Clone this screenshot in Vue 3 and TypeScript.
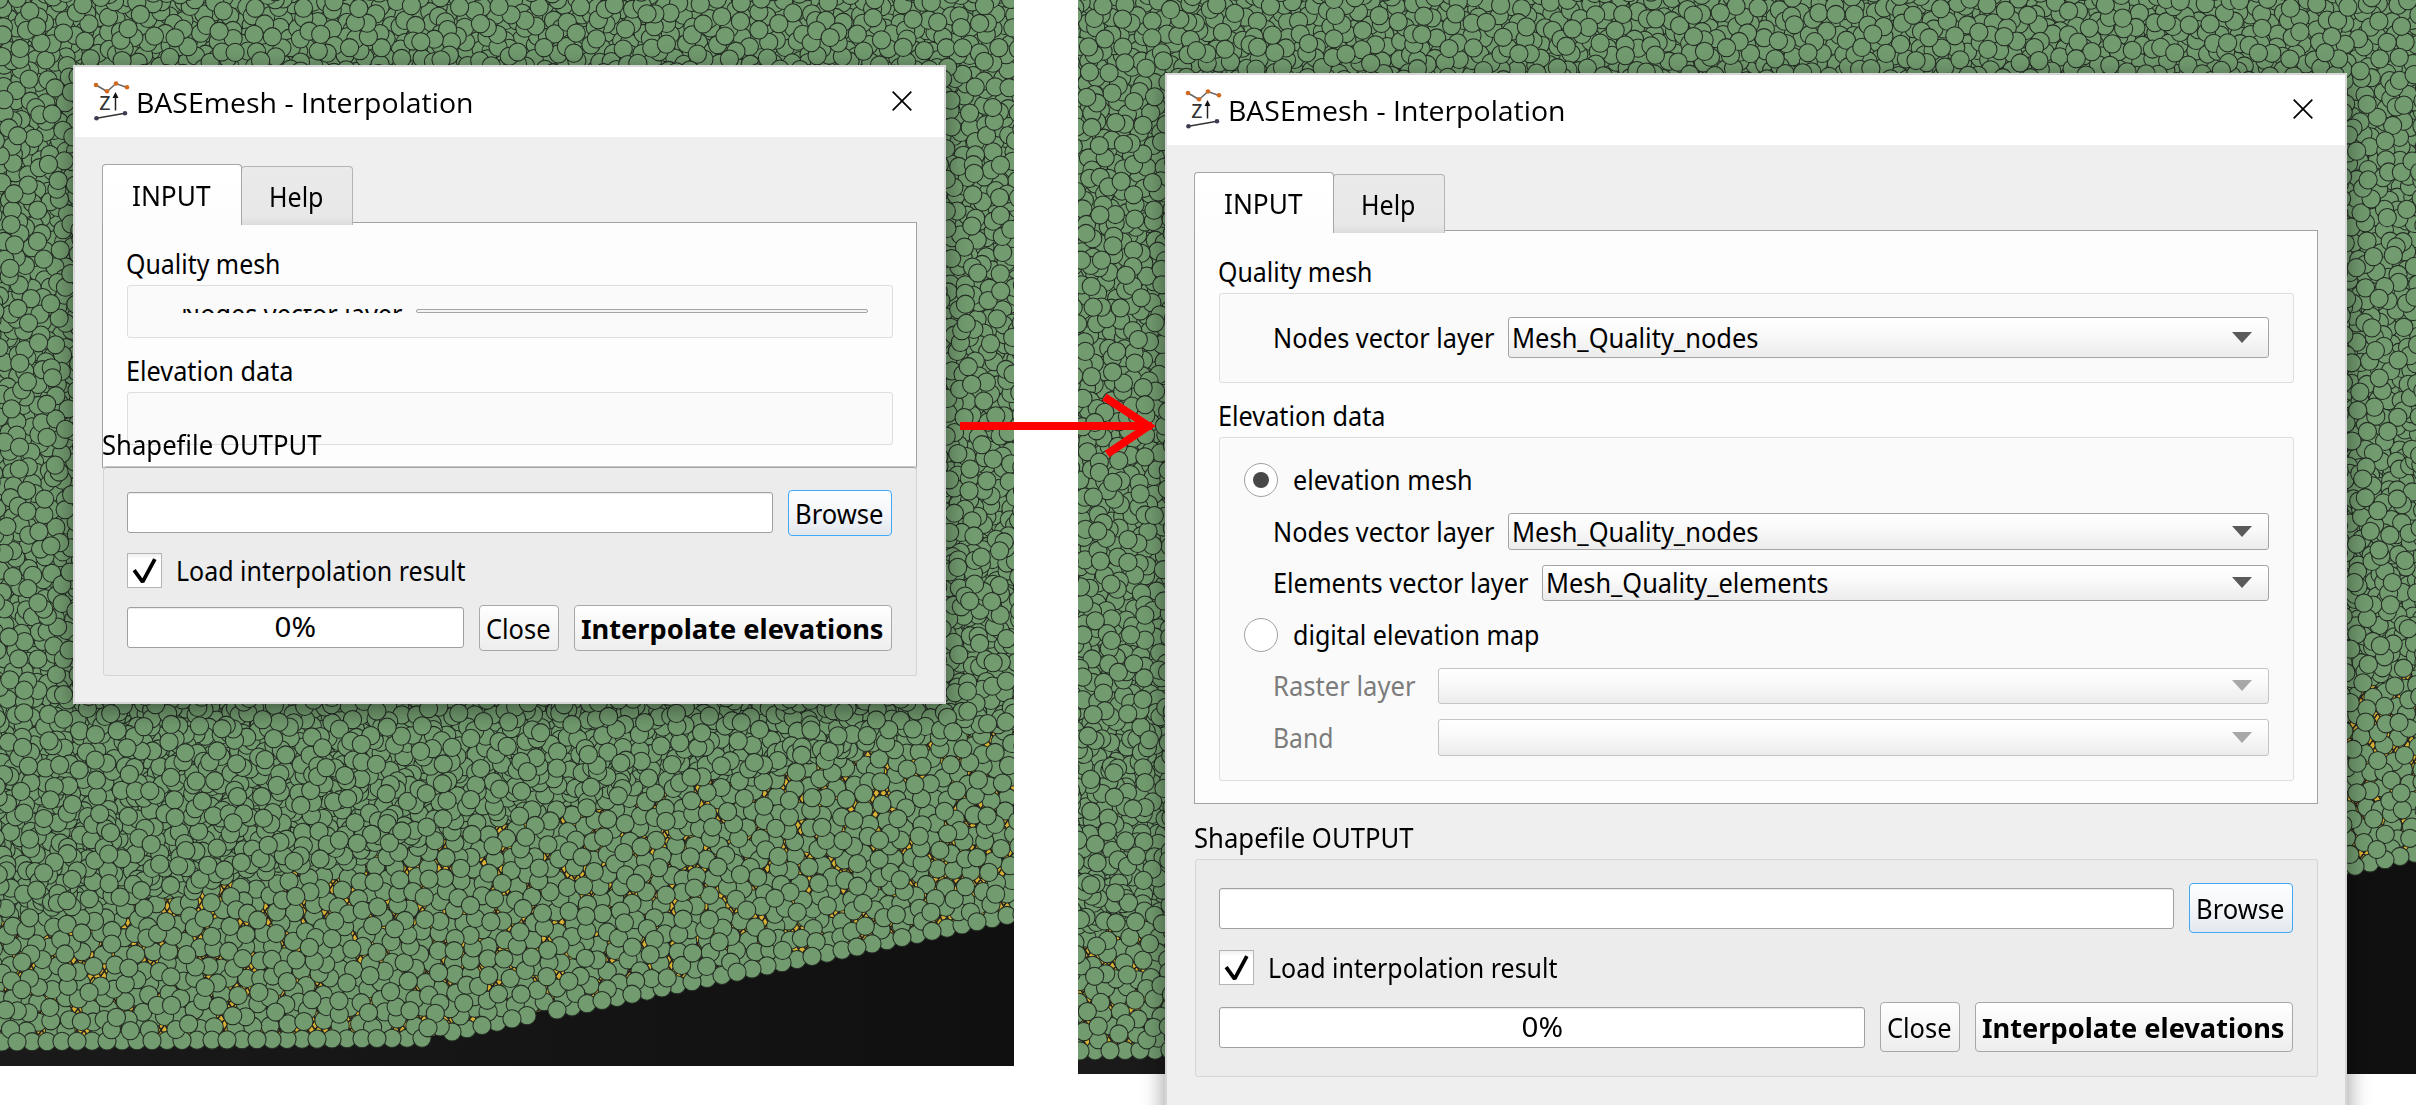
<script setup lang="ts">
import { onMounted, ref } from 'vue'

interface DialogSpec {
  id: string
  collapsed: boolean
}

interface Point {
  x: number
  y: number
}

interface MapSpec {
  width: number
  height: number
  seed: number
  edge: Point[]
  sparse: Point[]
}

const dialogs: DialogSpec[] = [
  { id: 'before', collapsed: true },
  { id: 'after', collapsed: false },
]

const maps: MapSpec[] = [
  {
    width: 1014,
    height: 1066,
    seed: 7,
    edge: [
      { x: 0, y: 1042 },
      { x: 432, y: 1038 },
      { x: 452, y: 1032 },
      { x: 530, y: 1015 },
      { x: 552, y: 1011 },
      { x: 1014, y: 914 },
    ],
    sparse: [
      { x: 0, y: 915 },
      { x: 170, y: 890 },
      { x: 330, y: 860 },
      { x: 480, y: 825 },
      { x: 640, y: 792 },
      { x: 820, y: 755 },
      { x: 1014, y: 722 },
    ],
  },
  {
    width: 1338,
    height: 1074,
    seed: 23,
    edge: [
      { x: 0, y: 1051 },
      { x: 430, y: 1046 },
      { x: 1269, y: 868 },
      { x: 1338, y: 853 },
    ],
    sparse: [
      { x: 0, y: 930 },
      { x: 430, y: 850 },
      { x: 1269, y: 685 },
      { x: 1338, y: 665 },
    ],
  },
]

const canvases = ref<HTMLCanvasElement[]>([])

// Horizontally scales a label to its nominal ink width.
const vFit = {
  mounted(el: HTMLElement, binding: { value: number }) {
    const natural = el.getBoundingClientRect().width
    const target = binding.value + 2.5
    el.style.width = `${target}px`
    el.style.transform = `scaleX(${target / natural})`
  },
}

function random(seed: number) {
  let s = seed
  return () => {
    s = (s + 0x6d2b79f5) | 0
    let t = Math.imul(s ^ (s >>> 15), 1 | s)
    t = (t + Math.imul(t ^ (t >>> 7), 61 | t)) ^ t
    return ((t ^ (t >>> 14)) >>> 0) / 4294967296
  }
}

function heightAt(line: Point[], x: number): number {
  for (let i = 1; i < line.length; i++) {
    if (x <= line[i].x) {
      const a = line[i - 1]
      const b = line[i]
      return a.y + ((x - a.x) / (b.x - a.x)) * (b.y - a.y)
    }
  }
  return line[line.length - 1].y
}

function drawMap(canvas: HTMLCanvasElement, map: MapSpec) {
  const ctx = canvas.getContext('2d')
  if (!ctx) return
  const rnd = random(map.seed)
  const { width, height } = map

  const night = ctx.createLinearGradient(0, 0, width, 0)
  night.addColorStop(0, '#1a1a1a')
  night.addColorStop(1, '#101010')
  ctx.fillStyle = night
  ctx.fillRect(0, 0, width, height)

  // Elements layer, seen only through the gaps between the nodes
  ctx.save()
  ctx.beginPath()
  ctx.moveTo(0, 0)
  for (const p of map.edge) ctx.lineTo(p.x, p.y - 2)
  ctx.lineTo(width, 0)
  ctx.closePath()
  ctx.clip()
  ctx.fillStyle = '#d9b232'
  ctx.fillRect(0, 0, width, height)
  ctx.strokeStyle = '#232323'
  ctx.lineWidth = 1.6
  ctx.beginPath()
  for (let i = -height; i < width; i += 7) {
    ctx.moveTo(i, 0)
    ctx.lineTo(i + height * 0.6, height)
    ctx.moveTo(i + height, 0)
    ctx.lineTo(i + height * 0.3, height)
  }
  ctx.stroke()
  ctx.restore()

  // Nodes layer: dart throwing with a spacing that depends on the zone
  const cell = 8
  const cols = Math.ceil((width + 40) / cell)
  const rows = Math.ceil((height + 40) / cell)
  const grid: Point[][] = Array.from({ length: cols * rows }, () => [])
  const nodes: Point[] = []
  const place = (x: number, y: number, gap: number): void => {
    const cx = Math.floor((x + 20) / cell)
    const cy = Math.floor((y + 20) / cell)
    for (let j = Math.max(0, cy - 2); j <= Math.min(rows - 1, cy + 2); j++) {
      for (let i = Math.max(0, cx - 2); i <= Math.min(cols - 1, cx + 2); i++) {
        for (const q of grid[j * cols + i]) {
          if ((q.x - x) ** 2 + (q.y - y) ** 2 < gap * gap) return
        }
      }
    }
    const p = { x, y }
    grid[cy * cols + cx].push(p)
    nodes.push(p)
  }
  for (let x = 2; x < width + 10; x += 15) {
    if (map.edge.length > 4 && (Math.abs(x - 442) < 8 || Math.abs(x - 540) < 8)) continue
    place(x, heightAt(map.edge, x), 3)
  }
  for (let n = 0; n < 240000; n++) {
    const x = rnd() * (width + 20) - 10
    const y = rnd() * (height + 10) - 10
    const limit = heightAt(map.edge, x)
    if (y > limit - 8) continue
    const border = heightAt(map.sparse, x)
    let gap = 7.8
    if (y > border) gap = 11.2
    else if (y > border - 215) gap = 5.8 + Math.sin(x / 23) * Math.cos(y / 19) * 1.4
    place(x, y, gap)
  }
  for (let i = nodes.length - 1; i > 0; i--) {
    const j = Math.floor(rnd() * (i + 1))
    const t = nodes[i]
    nodes[i] = nodes[j]
    nodes[j] = t
  }
  ctx.fillStyle = '#729b6f'
  ctx.strokeStyle = '#232b23'
  ctx.lineWidth = 1.05
  for (const p of nodes) {
    ctx.beginPath()
    ctx.arc(p.x, p.y, 9.1, 0, Math.PI * 2)
    ctx.fill()
    ctx.stroke()
  }
}

onMounted(() => {
  canvases.value.forEach((canvas, i) => drawMap(canvas, maps[i]))
})
</script>

<template>
  <main class="page">
    <canvas
      v-for="(map, i) in maps"
      :key="i"
      ref="canvases"
      class="map"
      :width="map.width"
      :height="map.height"
    ></canvas>

    <section v-for="d in dialogs" :key="d.id" class="dialog" :class="d.id">
      <header class="title">
        <svg class="logo" width="40" height="44" viewBox="0 0 40 44">
          <polyline points="5,7 16,13.5 25,5.5 36,9.5" fill="none" stroke="#666" stroke-width="1.5" />
          <g fill="#d2691e">
            <circle cx="5" cy="7" r="2.3" />
            <circle cx="16" cy="13.3" r="2.3" />
            <circle cx="25" cy="5.5" r="2.3" />
            <circle cx="36" cy="9.3" r="2.3" />
          </g>
          <text x="8" y="32" class="z">z</text>
          <path d="M24.5 32.5V18" stroke="#222" stroke-width="1.5" />
          <path d="M24.5 14l3 6h-6z" fill="#111" />
          <path d="M5.5 40.3L34 35.2" stroke="#333" stroke-width="1.4" />
          <circle cx="5.5" cy="40.3" r="2.3" fill="#3b3b52" />
          <circle cx="34" cy="35.2" r="2.3" fill="#3b3b52" />
        </svg>
        <h1><span v-fit="335" class="fit">BASEmesh - Interpolation</span></h1>
        <svg class="close" width="20" height="20" viewBox="0 0 20 20">
          <path d="M.7 .7L19.3 19.3M19.3 .7L.7 19.3" stroke="#000" stroke-width="1.7" />
        </svg>
      </header>

      <div class="body">
        <nav class="tabs">
          <div class="tab active"><span v-fit="76" class="fit">INPUT</span></div>
          <div class="tab"><span v-fit="52" class="fit">Help</span></div>
        </nav>

        <div class="pane">
          <div class="caption"><span v-fit="152" class="fit">Quality mesh</span></div>
          <div class="group quality">
            <div class="row" :class="{ squeezed: d.collapsed }">
              <span class="name"><span v-fit="219" class="fit">Nodes vector layer</span></span>
              <div class="combo">
                <template v-if="!d.collapsed">
                  <span v-fit="244" class="fit">Mesh_Quality_nodes</span><i></i>
                </template>
              </div>
            </div>
          </div>

          <div class="caption"><span v-fit="165" class="fit">Elevation data</span></div>
          <div class="group elevation">
            <template v-if="!d.collapsed">
              <div class="radio on"><b></b><span v-fit="177" class="fit">elevation mesh</span></div>
              <div class="row r1">
                <span class="name"><span v-fit="219" class="fit">Nodes vector layer</span></span>
                <div class="combo"><span v-fit="244" class="fit">Mesh_Quality_nodes</span><i></i></div>
              </div>
              <div class="row r2">
                <span class="name"><span v-fit="253" class="fit">Elements vector layer</span></span>
                <div class="combo"><span v-fit="280" class="fit">Mesh_Quality_elements</span><i></i></div>
              </div>
              <div class="radio"><b></b><span v-fit="244" class="fit">digital elevation map</span></div>
              <div class="row r3 off">
                <span class="name"><span v-fit="140" class="fit">Raster layer</span></span>
                <div class="combo"><i></i></div>
              </div>
              <div class="row r4 off">
                <span class="name"><span v-fit="58" class="fit">Band</span></span>
                <div class="combo"><i></i></div>
              </div>
            </template>
          </div>
        </div>

        <div class="output">
          <div class="caption"><span v-fit="217" class="fit">Shapefile OUTPUT</span></div>
          <div class="group out">
            <div class="line">
              <div class="field"></div>
              <div class="button focus browse"><span v-fit="86" class="fit">Browse</span></div>
            </div>
            <div class="check">
              <svg width="35" height="35" viewBox="0 0 35 35">
                <path d="M6.5 17L15.5 29.5L28.5 5.5" fill="none" stroke="#000" stroke-width="4" stroke-linejoin="bevel" />
              </svg>
              <span v-fit="287" class="fit">Load interpolation result</span>
            </div>
            <div class="line">
              <div class="field progress"><span v-fit="39" class="fit">0%</span></div>
              <div class="button dismiss"><span v-fit="62" class="fit">Close</span></div>
              <div class="button run"><span v-fit="300" class="fit">Interpolate elevations</span></div>
            </div>
          </div>
        </div>
      </div>
    </section>

    <svg class="arrow" width="200" height="70" viewBox="0 0 200 70">
      <path d="M0 36H192M144.500 7L188.500 36L147 64" fill="none" stroke="#f00" stroke-width="8" />
    </svg>
  </main>
</template>

<style>
body {
  margin: 0;
}
</style>

<style scoped>
.page {
  position: relative;
  width: 2416px;
  height: 1105px;
  overflow: hidden;
  display: flex;
  align-items: flex-start;
  gap: 64px;
  background: #fff;
  color: #000;
  font: 26.4px/30px 'Noto Sans', 'Liberation Sans', sans-serif;
}
.page * {
  box-sizing: border-box;
}
.map {
  display: block;
  flex: none;
}
.fit {
  display: inline-block;
  white-space: nowrap;
  transform-origin: 0 50%;
  margin-left: -2px;
}

.dialog {
  position: absolute;
  display: flex;
  flex-direction: column;
  background: #efefef;
  border: 2px solid #d6d6d6;
  box-shadow: 0 6px 22px rgba(0, 0, 0, 0.42);
}
.before {
  left: 73px;
  top: 65px;
  width: 873px;
  height: 639px;
  --btn: 46px;
}
.after {
  left: 1165px;
  top: 73px;
  width: 1182px;
  height: 1060px;
  --btn: 50px;
}

.title {
  flex: none;
  display: flex;
  align-items: center;
  height: 70px;
  padding: 0 32px 0 16px;
  background: #fff;
}
.logo {
  margin-top: -4px;
}
.z {
  font: 25px 'Open Sans', sans-serif;
  fill: #333;
}
.title h1 {
  flex: 1;
  margin: 1px 0 0 7px;
  font: 27.5px/32px 'Open Sans', sans-serif;
}
.close {
  margin-top: -2px;
}

.body {
  padding: 27px 27px 0;
}
.tabs {
  display: flex;
  align-items: flex-end;
  height: 58px;
}
.tab {
  position: relative;
  z-index: 1;
  width: 112px;
  height: 59px;
  margin: 0 0 -3px -1px;
  padding-top: 15px;
  padding-left: 1px;
  text-align: center;
  border: 1px solid #b4b4b4;
  border-bottom: 0;
  border-radius: 4px 4px 0 0;
  background: linear-gradient(#eaeaea, #e8e8e8 85%, #dcdcdc);
}
.tab.active {
  z-index: 2;
  width: 140px;
  height: 61px;
  margin-left: 0;
  padding-top: 16px;
  padding-right: 1px;
  border-color: #a6a6a6;
  background: linear-gradient(#fff, #fdfdfd);
}

.pane {
  padding: 26px 23px 22px 24px;
  border: 1px solid #a2a2a2;
  background: #fdfdfd;
}
.caption {
  height: 30px;
  margin-bottom: 6px;
  padding-left: 1px;
}
.group {
  border: 1px solid #dedede;
  border-radius: 3px;
  background: #fafafa;
}
.quality {
  height: 90px;
  margin-bottom: 18px;
  padding: 23px 24px 0 54px;
}
.before .quality {
  height: 53px;
}
.elevation {
  height: 344px;
  padding: 25px 24px 0 24px;
}
.before .elevation {
  height: 53px;
}

.row {
  display: flex;
  align-items: center;
  height: 41px;
}
.name {
  flex: none;
  margin-right: 13.500px;
  padding-left: 1px;
}
.combo {
  flex: 1;
  display: flex;
  align-items: center;
  height: 100%;
  padding: 0 16px 0 5px;
  border: 1px solid #a4a4a4;
  border-radius: 3px;
  background: linear-gradient(#fff, #fafafa 40%, #ececec);
}
.combo i {
  margin: -1px 0 0 auto;
  border: 10px solid transparent;
  border-top: 11px solid #5a5a5a;
  border-bottom: 0;
}
.row.squeezed {
  height: 4px;
  align-items: flex-start;
}
.squeezed .name {
  display: flex;
  align-items: flex-start;
  height: 4px;
  overflow: hidden;
}
.squeezed .name .fit {
  flex: none;
  height: 30px;
  margin-top: -10px;
}
.squeezed .combo {
  border-radius: 2px;
  background: #f4f4f4;
}
.elevation .row {
  padding-left: 30px;
}
.elevation .r1 {
  height: 37px;
  margin: 16px 0 15px;
}
.elevation .r2 {
  height: 36px;
  margin-bottom: 17px;
}
.elevation .r3 {
  height: 36px;
  margin: 16px 0 15px;
}
.elevation .r4 {
  height: 37px;
}
.off {
  color: #7c7c7c;
}
.off .name {
  width: 150px;
}
.off .combo {
  border-color: #c4c4c4;
}
.off .combo i {
  border-top-color: #a8a8a8;
}

.radio {
  display: flex;
  align-items: center;
  height: 34px;
}
.radio b {
  display: flex;
  align-items: center;
  justify-content: center;
  width: 34px;
  height: 34px;
  margin-right: 17px;
  border: 1px solid #a0a0a0;
  border-radius: 50%;
  background: #fff;
}
.radio.on b::after {
  content: '';
  width: 16px;
  height: 16px;
  border-radius: 50%;
  background: #484848;
}

.output {
  position: relative;
  margin-top: 19px;
}
.before .output {
  margin-top: -38px;
}
.output .caption {
  position: relative;
  z-index: 1;
  padding-left: 2px;
}
.out {
  display: flex;
  flex-direction: column;
  gap: 17px;
  margin-left: 1px;
  padding: 23px 24px 24px 23px;
  border-color: #d4d4d4;
  background: #ececec;
}
.before .out {
  border-top-color: #c8c8c8;
  box-shadow: inset 0 1px #a2a2a2;
}
.line {
  display: flex;
  align-items: center;
  gap: 15px;
  height: var(--btn);
}
.before .line {
  align-items: flex-start;
}
.after .line {
  padding-bottom: 0;
}
.field {
  flex: 1;
  height: 41px;
  padding-top: 4px;
  text-align: center;
  border: 1px solid #a0a0a0;
  border-radius: 3px;
  background: #fff;
  box-shadow: inset 0 1px #ececec;
}
.progress {
  padding-right: 3px;
}
.before .field {
  margin-top: 2px;
}
.button {
  display: flex;
  align-items: center;
  justify-content: center;
  height: 100%;
  padding-top: 2px;
  border: 1px solid #a8a8a8;
  border-radius: 4px;
  background: linear-gradient(#fff, #f8f8f8 40%, #ededed);
}
.browse {
  width: 104px;
}
.dismiss {
  width: 80px;
}
.run {
  width: 318px;
  font-weight: 700;
}
.focus {
  border-color: #3fa9f5;
  background: linear-gradient(#fdfeff, #f4f6f9 50%, #e3e8ee);
}
.check {
  display: flex;
  align-items: center;
  gap: 16px;
  height: 35px;
}
.check svg {
  border: 1px solid #b4b4b4;
  background: linear-gradient(#eee, #fff 15%);
}

.arrow {
  position: absolute;
  left: 960px;
  top: 390px;
}
</style>
